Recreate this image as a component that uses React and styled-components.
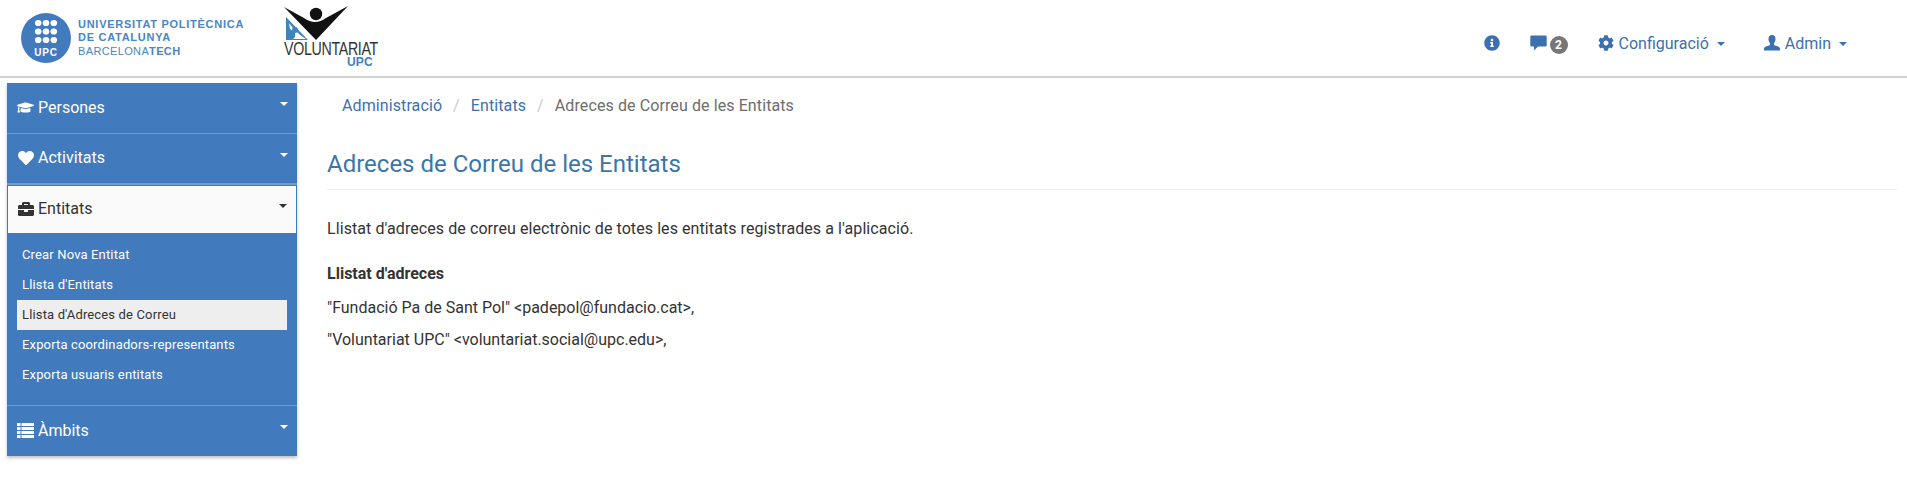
import React from "react";
import styled, { createGlobalStyle } from "styled-components";
import { FaGraduationCap, FaHeart, FaBriefcase, FaInfoCircle, FaCog } from "react-icons/fa";

const Global = createGlobalStyle`
  html, body { margin: 0; padding: 0; background: #fff; }
  body { font-family: Roboto, "Liberation Sans", sans-serif; font-size: 16px; color: #333; }
  * { box-sizing: border-box; }
`;

const Page = styled.div`
  width: 1907px;
  height: 488px;
  overflow: hidden;
  display: flex;
  flex-direction: column;
`;

const Header = styled.header`
  height: 78px;
  flex: none;
  display: flex;
  align-items: flex-start;
  border-bottom: 2px solid #d2d2d2;
  padding-left: 21px;
`;

const UpcLogo = styled.div`
  display: flex;
  align-items: center;
  gap: 7px;
  margin-top: 13px;
  width: 262px;
`;

const UpcText = styled.div`
  display: flex;
  flex-direction: column;
  font-family: "Liberation Sans", Arial, sans-serif;
  font-size: 11px;
  line-height: 13.5px;
  letter-spacing: 0.73px;
  color: #4a85c5;
  font-weight: 700;
`;

const UpcThin = styled.span`
  font-weight: 400;
  letter-spacing: 0.36px;
  b { font-weight: 700; }
`;

const VolLogo = styled.div`
  display: flex;
  flex-direction: column;
  align-items: flex-start;
  width: 100px;
  margin: 6px 0 0 1px;
`;

const VolWord = styled.div`
  font-family: "Liberation Sans", sans-serif;
  font-size: 18px;
  line-height: 15px;
  letter-spacing: -0.4px;
  color: #333;
  margin-top: 1px;
  white-space: nowrap;
  transform: scaleX(0.79);
  transform-origin: left center;
`;

const VolUpc = styled.div`
  font-family: "Liberation Sans", sans-serif;
  font-size: 12px;
  font-weight: 700;
  line-height: 10px;
  color: #3f7fc0;
  margin: 0 0 0 63px;
  letter-spacing: 0.2px;
`;

const TopNav = styled.nav`
  margin-left: auto;
  height: 76px;
  display: flex;
  align-items: center;
  color: #3d70ae;
  font-size: 16px;
  padding: 10px 60px 0 0;
`;

const NavItem = styled.a`
  display: inline-flex;
  align-items: center;
  margin-left: ${(p) => p.$gap}px;
  gap: ${(p) => p.$inner || 0}px;
  color: inherit;
`;

const Badge = styled.span`
  width: 18px;
  height: 18px;
  border-radius: 50%;
  background: #777;
  color: #fff;
  font-size: 12px;
  font-weight: 700;
  display: inline-flex;
  align-items: center;
  justify-content: center;
  margin: 3px 0 0 3px;
`;

const Caret = styled.span`
  display: inline-block;
  width: 0;
  height: 0;
  border-left: 4px solid transparent;
  border-right: 4px solid transparent;
  border-top: 4px solid ${(p) => p.$color || "currentColor"};
`;

const NavCaret = styled(Caret)`
  margin: 2px 0 0 3px;
`;

const Body = styled.div`
  flex: 1;
  display: flex;
  align-items: flex-start;
`;

const Sidebar = styled.aside`
  width: 290px;
  margin: 5px 0 0 7px;
  flex: none;
  background: #427abe;
  box-shadow: 0 2px 3px rgba(0, 0, 0, 0.25);
  display: flex;
  flex-direction: column;
`;

const MenuItem = styled.div`
  height: ${(p) => p.$h || 50}px;
  display: flex;
  align-items: center;
  padding: 0 9px 2px ${(p) => (p.$open ? 9 : 10)}px;
  font-size: 16px;
  color: ${(p) => (p.$open ? "#333" : "#fff")};
  background: ${(p) => (p.$open ? "#fafafa" : "transparent")};
  border: ${(p) => (p.$open ? "1px solid #427abe" : "none")};
  border-bottom: ${(p) => (p.$open ? "1px solid #427abe" : p.$sep ? "1px solid #729cc9" : "none")};
  margin-top: ${(p) => (p.$open ? "1px" : "0")};
  box-shadow: ${(p) => (p.$open ? "0 -1px 0 #729cc9" : "none")};
`;

const MenuIcon = styled.span`
  width: 17px;
  height: 20px;
  display: inline-flex;
  align-items: center;
  justify-content: center;
  margin-right: 4px;
  flex: none;
`;

const MenuLabel = styled.span`
  flex: 1;
`;

const MenuCaret = styled.span`
  margin-bottom: 6px;
  display: inline-flex;
`;

const SubMenu = styled.ul`
  list-style: none;
  margin: 0;
  padding: 6px 10px 15px;
  border-bottom: 1px solid #729cc9;
  display: flex;
  flex-direction: column;
`;

const SubItem = styled.li`
  height: 30px;
  line-height: 30px;
  padding-left: 5px;
  font-size: 13px;
  letter-spacing: 0.15px;
  color: ${(p) => (p.$active ? "#333" : "#fff")};
  background: ${(p) => (p.$active ? "#eeeeee" : "transparent")};
`;

const Main = styled.main`
  flex: 1;
  margin: 0 10px 0 30px;
  display: flex;
  flex-direction: column;
`;

const Breadcrumb = styled.ol`
  list-style: none;
  margin: 0;
  padding: 0 0 0 15px;
  height: 55px;
  display: flex;
  align-items: center;
  font-size: 16px;
  letter-spacing: 0.1px;
`;

const Crumb = styled.li`
  color: ${(p) => (p.$current ? "#6d6d6d" : "#3d70ae")};
`;

const CrumbSep = styled.li`
  color: #ccc;
  padding: 0 11px;
`;

const Title = styled.h1`
  margin: 17px 0 0;
  font-size: 24px;
  line-height: 29px;
  font-weight: 400;
  color: #3c76a8;
  padding-bottom: 10px;
  border-bottom: 1px solid #eee;
`;

const Para = styled.p`
  margin: ${(p) => p.$mt}px 0 0;
  font-size: 16px;
  line-height: 21px;
  color: #333;
`;

const Lead = styled(Para)`
  letter-spacing: 0.08px;
`;

const Heading = styled(Para)`
  font-weight: 700;
`;

function UpcMark() {
  const dots = [];
  [10, 18.5, 27].forEach((y) => [17.2, 25, 32.8].forEach((x) => dots.push(
    <ellipse key={`${x}-${y}`} cx={x} cy={y} rx="3.3" ry="3.1" fill="#fff" />
  )));
  return (
    <svg width="50" height="50" viewBox="0 0 50 50">
      <circle cx="25" cy="25" r="25" fill="#427abe" />
      {dots}
      <text x="25" y="43" textAnchor="middle" fontFamily="Liberation Sans, sans-serif" fontWeight="700" fontSize="10" letterSpacing="0.8" fill="#fff">UPC</text>
    </svg>
  );
}

function VolMark() {
  return (
    <svg width="66" height="35" viewBox="0 0 66 35">
      <path d="M2 11 L2 34 L24 34 Z" fill="#3f84bd" />
      <path d="M5 17 Q12 27 22 33 L9 33 Q15 28 6 23 Z" fill="#fff" />
      <circle cx="11" cy="24" r="3" fill="#3f84bd" />
      <path d="M0 1 L20 12 Q31 20 42 12 L64 0 L32 34 Z" fill="#111" />
      <circle cx="32" cy="8" r="6.2" fill="#111" />
    </svg>
  );
}

function CommentIcon() {
  return (
    <svg width="17" height="16" viewBox="0 0 17 16">
      <path d="M1.5 0.5 H15.5 A1.2 1.2 0 0 1 16.7 1.7 V10.3 A1.2 1.2 0 0 1 15.5 11.5 H8 L4 15.5 V11.5 H1.5 A1.2 1.2 0 0 1 0.3 10.3 V1.7 A1.2 1.2 0 0 1 1.5 0.5 Z" fill="currentColor" />
    </svg>
  );
}

function UserIcon() {
  return (
    <svg width="16" height="16" viewBox="0 0 16 16" fill="currentColor">
      <path d="M8 0 C10.6 0 11.7 2 11.5 4.3 C11.4 6 10.8 7.4 10 8.3 V10 C12 11 15.2 11.5 16 13 V15.5 H0 V13 C0.8 11.5 4 11 6 10 V8.3 C5.2 7.4 4.6 6 4.5 4.3 C4.3 2 5.4 0 8 0 Z" />
    </svg>
  );
}

function ListIcon() {
  return (
    <svg width="17" height="15" viewBox="0 0 17 15" fill="currentColor">
      {[0, 4, 8, 12].map((y) => (
        <g key={y}>
          <rect x="0" y={y} width="3.5" height="3" />
          <rect x="4.5" y={y} width="12.5" height="3" />
        </g>
      ))}
    </svg>
  );
}

function Menu({ icon, label, open, sep, h }) {
  return (
    <MenuItem $open={open} $sep={sep} $h={h}>
      <MenuIcon>{icon}</MenuIcon>
      <MenuLabel>{label}</MenuLabel>
      <MenuCaret><Caret $color={open ? "#333" : "#fff"} /></MenuCaret>
    </MenuItem>
  );
}

export default function App() {
  return (
    <Page>
      <Global />
      <Header>
        <UpcLogo>
          <UpcMark />
          <UpcText>
            <span>UNIVERSITAT POLITÈCNICA</span>
            <span>DE CATALUNYA</span>
            <UpcThin>BARCELONA<b>TECH</b></UpcThin>
          </UpcText>
        </UpcLogo>
        <VolLogo>
          <VolMark />
          <VolWord>VOLUNTARIAT</VolWord>
          <VolUpc>UPC</VolUpc>
        </VolLogo>
        <TopNav>
          <NavItem $gap={0}><FaInfoCircle size={16} /></NavItem>
          <NavItem $gap={30}><CommentIcon /><Badge>2</Badge></NavItem>
          <NavItem $gap={30} $inner={5}><FaCog size={16} />Configuració<NavCaret /></NavItem>
          <NavItem $gap={39} $inner={5}><UserIcon />Admin<NavCaret /></NavItem>
        </TopNav>
      </Header>
      <Body>
        <Sidebar>
          <Menu icon={<FaGraduationCap size={19} />} label="Persones" sep h={51} />
          <Menu icon={<FaHeart size={16} />} label="Activitats" sep h={50} />
          <Menu icon={<FaBriefcase size={16} />} label="Entitats" open h={49} />
          <SubMenu>
            <SubItem>Crear Nova Entitat</SubItem>
            <SubItem>Llista d'Entitats</SubItem>
            <SubItem $active>Llista d'Adreces de Correu</SubItem>
            <SubItem>Exporta coordinadors-representants</SubItem>
            <SubItem>Exporta usuaris entitats</SubItem>
          </SubMenu>
          <Menu icon={<ListIcon />} label="Àmbits" h={50} />
        </Sidebar>
        <Main>
          <Breadcrumb>
            <Crumb>Administració</Crumb>
            <CrumbSep>/</CrumbSep>
            <Crumb>Entitats</Crumb>
            <CrumbSep>/</CrumbSep>
            <Crumb $current>Adreces de Correu de les Entitats</Crumb>
          </Breadcrumb>
          <Title>Adreces de Correu de les Entitats</Title>
          <Lead $mt={28}>Llistat d'adreces de correu electrònic de totes les entitats registrades a l'aplicació.</Lead>
          <Heading $mt={24}>Llistat d'adreces</Heading>
          <Para $mt={13}>"Fundació Pa de Sant Pol" &lt;padepol@fundacio.cat&gt;,</Para>
          <Para $mt={11}>"Voluntariat UPC" &lt;voluntariat.social@upc.edu&gt;,</Para>
        </Main>
      </Body>
    </Page>
  );
}
